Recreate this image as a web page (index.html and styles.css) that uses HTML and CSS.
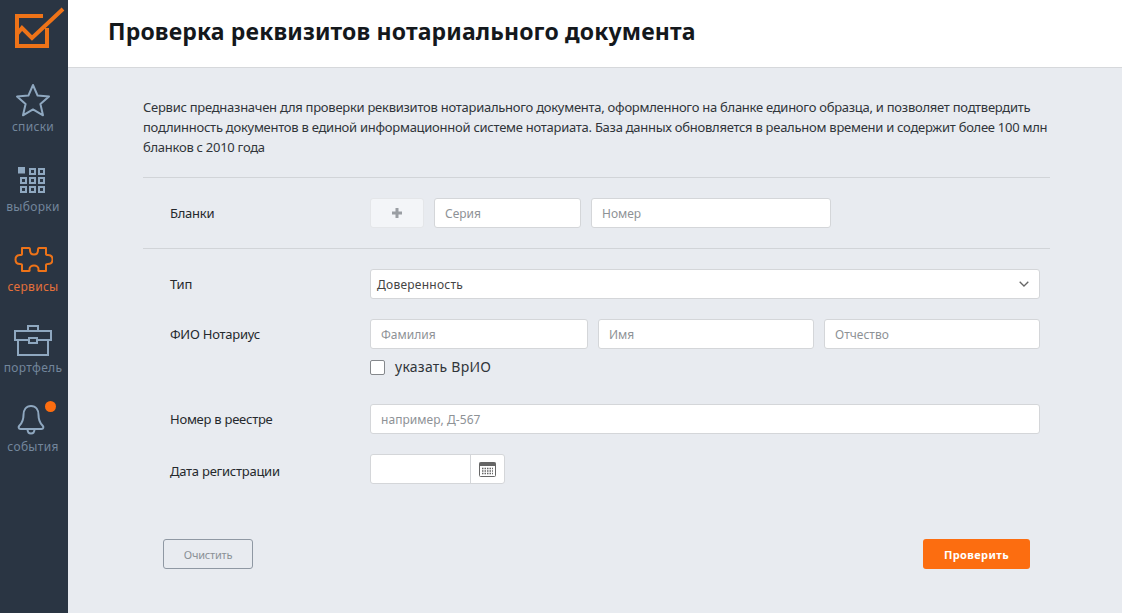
FILE: index.html
```html
<!DOCTYPE html>
<html lang="ru">
<head>
<meta charset="utf-8">
<title>Проверка реквизитов нотариального документа</title>
<link rel="stylesheet" href="styles.css">
</head>
<body>
<div class="app">
  <nav class="sidebar">
    <div class="logo">
      <svg width="68" height="52" viewBox="0 0 68 52" fill="none"><path d="M43 16H17V46H47V28" stroke="#ee7318" stroke-width="4"/><path d="M17 34l5-6 10 10L63 9" stroke="#ee7318" stroke-width="4"/></svg>
    </div>
    <a class="nav-item">
      <svg class="nav-icon" width="36" height="36" viewBox="0 0 36 36" fill="none"><path d="M18 3l4.600 10.600 11.400 1-8.600 7.500 2.600 11.200L18 27.400 8 33.300l2.600-11.200L2 14.600l11.400-1z" stroke="#8fa8c0" stroke-width="2" stroke-linejoin="round"/></svg>
      <span>списки</span>
    </a>
    <a class="nav-item">
      <svg class="nav-icon" width="36" height="36" viewBox="0 0 36 36" fill="none" stroke="#8fa8c0" stroke-width="2"><rect x="3" y="5" width="7" height="6.500" fill="#8fa8c0" stroke="none"/><rect x="15" y="7" width="5" height="5"/><rect x="24" y="7" width="5" height="5"/><rect x="6" y="16" width="5" height="5"/><rect x="15" y="16" width="5" height="5"/><rect x="24" y="16" width="5" height="5"/><rect x="6" y="25" width="5" height="5"/><rect x="15" y="25" width="5" height="5"/><rect x="24" y="25" width="5" height="5"/></svg>
      <span>выборки</span>
    </a>
    <a class="nav-item active">
      <svg class="nav-icon" width="40" height="36" viewBox="-1 0 40 36" fill="none"><path d="M8 6H15C16 6 16 7 16 8C16 11 17.500 12.500 20 12.500C22.500 12.500 24 11 24 8C24 7 24 6 25 6H32V12C32 13 33 13 34 13C37 13 38.500 15 38.500 17.500C38.500 20 37 22 34 22C33 22 32 22 32 23V29H25C24 29 24.500 28 24.500 27C24.500 25 22.500 23.500 20 23.500C17.500 23.500 15.500 25 15.500 27C15.500 28 16 29 15 29H8V23C8 22 7 22 6 22C3 22 1.500 20 1.500 17.500C1.500 15 3 13 6 13C7 13 8 13 8 12Z" stroke="#ee7318" stroke-width="2" stroke-linejoin="round"/></svg>
      <span>сервисы</span>
    </a>
    <a class="nav-item roomy">
      <svg class="nav-icon" width="40" height="36" viewBox="-1 0 40 36" fill="none" stroke="#8fa8c0" stroke-width="2"><path d="M14 9V4H24V9"/><path d="M1 9H37V18H1Z"/><path d="M4 18V33H34V18"/><rect x="15" y="16" width="8" height="5" fill="#2a3543"/></svg>
      <span>портфель</span>
    </a>
    <a class="nav-item">
      <svg class="nav-icon" width="36" height="36" viewBox="0 0 36 36" fill="none" stroke="#8fa8c0" stroke-width="2" stroke-linejoin="round"><path d="M16 4C11 4 8.500 8 8.500 13C8.500 18 7 21 4.500 23.500C3 25 3.500 27 5.500 27H26.500C28.500 27 29 25 27.500 23.500C25 21 23.500 18 23.500 13C23.500 8 21 4 16 4Z"/><path d="M12.500 27c0 3 1.500 4.500 3.500 4.500s3.500-1.500 3.500-4.500"/></svg>
      <i class="badge"></i>
      <span>события</span>
    </a>
  </nav>
  <div class="page">
    <header class="topbar"><h1>Проверка реквизитов нотариального документа</h1></header>
    <main class="content">
      <p class="intro">Сервис предназначен для проверки реквизитов нотариального документа, оформленного на бланке единого образца, и позволяет подтвердить подлинность документов в единой информационной системе нотариата. База данных обновляется в реальном времени и содержит более 100 млн бланков с 2010 года</p>
      <div class="section blanks">
        <div class="row">
          <label class="label">Бланки</label>
          <div class="controls">
            <button class="plus" type="button">
              <svg width="12" height="12" viewBox="0 0 12 12"><path d="M6 1v10M1 6h10" stroke="#9a9ea3" stroke-width="3"/></svg>
            </button>
            <input class="input w-series" placeholder="Серия">
            <input class="input w-number" placeholder="Номер">
          </div>
        </div>
      </div>
      <div class="section fields">
        <div class="row">
          <label class="label">Тип</label>
          <div class="controls">
            <div class="select">
              <span>Доверенность</span>
              <svg width="10" height="6" viewBox="0 0 10 6" fill="none"><path d="M.7.7L5 5l4.300-4.300" stroke="#666" stroke-width="1.300"/></svg>
            </div>
          </div>
        </div>
        <div class="row notary">
          <label class="label">ФИО Нотариус</label>
          <div class="stack">
            <div class="controls">
              <input class="input w-first" placeholder="Фамилия">
              <input class="input grow" placeholder="Имя">
              <input class="input grow" placeholder="Отчество">
            </div>
            <div class="check"><i class="box"></i><span>указать ВрИО</span></div>
          </div>
        </div>
        <div class="row">
          <label class="label">Номер в реестре</label>
          <div class="controls"><input class="input grow tight" placeholder="например, Д-567"></div>
        </div>
        <div class="row">
          <label class="label low">Дата регистрации</label>
          <div class="date">
            <div class="date-field"></div>
            <div class="date-btn">
              <svg width="17" height="15" viewBox="0 0 17 15"><rect x=".5" y=".5" width="16" height="14" rx="1" fill="#fff" stroke="#666"/><rect x=".5" y=".5" width="16" height="3.500" fill="#666"/><path d="M3 6.500h11M3 9h11M3 11.500h11" stroke="#666" stroke-width="1.400" stroke-dasharray="1.500 1"/></svg>
            </div>
          </div>
        </div>
      </div>
      <div class="actions">
        <button class="btn-clear" type="button">Очистить</button>
        <button class="btn-check" type="button">Проверить</button>
      </div>
    </main>
  </div>
</div>
</body>
</html>
```
FILE: styles.css
```css
* { box-sizing: border-box; }
html, body { margin: 0; height: 100%; }
body {
  font-family: "Noto Sans", "Open Sans", sans-serif;
  font-size: 13px;
  color: #2b2f33;
  background: #e8ebf0;
  overflow: hidden;
}
.app { display: flex; height: 613px; }
.sidebar {
  width: 68px;
  flex: none;
  background: #2a3543;
  display: flex;
  flex-direction: column;
}
.logo { height: 52px; width: 68px; margin-bottom: 30px; }
.logo svg { display: block; }
.nav-item {
  width: 66px;
  height: 80px;
  position: relative;
  display: flex;
  flex-direction: column;
  align-items: center;
  color: #73869c;
  font-size: 12px;
  line-height: 16px;
  letter-spacing: .3px;
  white-space: nowrap;
}
.nav-item.active { color: #e4703a; }
.nav-icon { display: block; height: 36px; margin-bottom: 1px; flex: none; }
.roomy .nav-icon { margin-bottom: 2px; }
.badge {
  position: absolute;
  top: -1px;
  right: 10px;
  width: 11px;
  height: 11px;
  border-radius: 50%;
  background: #fc6d10;
}
.page { flex: 1; min-width: 0; display: flex; flex-direction: column; }
.topbar {
  height: 68px;
  background: #fff;
  border-bottom: 1px solid #d6d8db;
  padding: 16px 0 0 40px;
}
.topbar h1 {
  margin: 0;
  font-size: 23px;
  line-height: 30px;
  font-weight: 700;
  letter-spacing: .14px;
  color: #14181c;
}
.content { padding: 29px 72px 0 75px; }
.intro { margin: 0 0 20px; line-height: 20px; letter-spacing: -.265px; color: #30353a; }
.section { border-top: 1px solid #d1d4d8; }
.blanks { padding: 20px 0; }
.fields { padding: 20px 0 0; }
.row {
  display: flex;
  padding: 0 10px 20px 27px;
}
.blanks .row { padding-bottom: 0; }
.label { width: 200px; height: 30px; flex: none; line-height: 30px; letter-spacing: -.25px; color: #25292d; }
.label.low { line-height: 34px; }
.controls { display: flex; gap: 10px; flex: 1; min-width: 0; }
.stack { flex: 1; min-width: 0; }
.input {
  height: 30px;
  padding: 0 10px;
  border: 1px solid #d4d6d9;
  border-radius: 3px;
  background: #fff;
  font: inherit;
  font-size: 12px;
  min-width: 0;
}
.input::placeholder { color: #8e9296; opacity: 1; }
.grow { flex: 1; }
.tight { letter-spacing: .05px; }
.w-first { width: 218px; flex: none; }
.w-series { width: 147px; }
.w-number { width: 240px; }
.plus {
  width: 54px;
  height: 30px;
  padding: 0;
  border: 1px solid #e4e6e9;
  border-radius: 3px;
  background: #f3f5f8;
  display: flex;
  align-items: center;
  justify-content: center;
}
.select {
  flex: 1;
  height: 30px;
  padding: 0 10px 0 6px;
  border: 1px solid #d4d6d9;
  border-radius: 3px;
  background: #fff;
  font-size: 12px;
  letter-spacing: .25px;
  color: #444;
  display: flex;
  align-items: center;
  justify-content: space-between;
}
.notary { padding-bottom: 27px; }
.check {
  display: flex;
  align-items: center;
  gap: 10px;
  margin-top: 8px;
  font-size: 14px;
  line-height: 20px;
  letter-spacing: .25px;
  color: #30353a;
}
.box {
  width: 15px;
  height: 15px;
  background: #fff;
  border: 1px solid #85888c;
  border-radius: 2px;
}
.date {
  display: flex;
  width: 135px;
  height: 30px;
  border: 1px solid #d4d6d9;
  border-radius: 3px;
  background: #fff;
}
.date-field { width: 100px; border-right: 1px solid #d4d6d9; }
.date-btn { flex: 1; display: flex; align-items: center; justify-content: center; }
.date-btn svg { display: block; }
.actions {
  display: flex;
  justify-content: space-between;
  padding: 35px 20px 0;
}
.btn-clear, .btn-check {
  height: 30px;
  border-radius: 3px;
  font-family: inherit;
  font-size: 11px;
}
.btn-clear {
  width: 90px;
  background: transparent;
  border: 1px solid #8f98a3;
  letter-spacing: -.2px;
  color: #8a9096;
}
.btn-check {
  width: 107px;
  background: #fc6d10;
  border: 0;
  letter-spacing: .4px;
  color: #fff;
  font-weight: 700;
}
```
